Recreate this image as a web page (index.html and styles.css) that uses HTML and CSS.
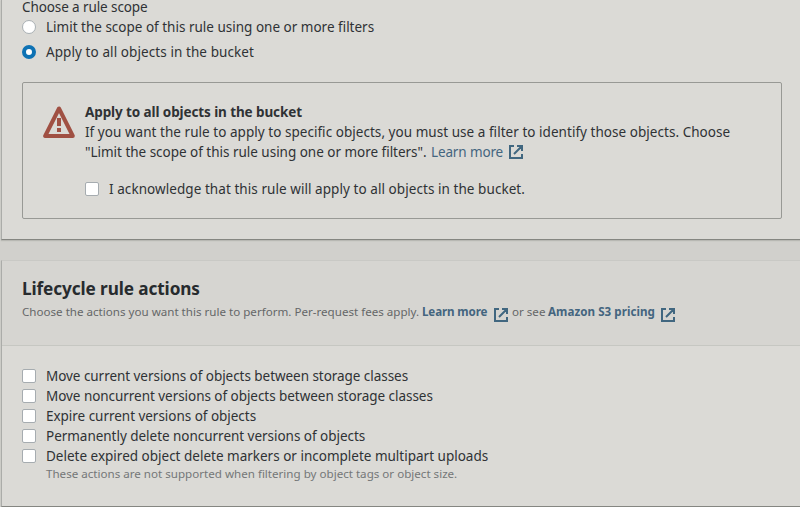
FILE: index.html
```
<!DOCTYPE html>
<html lang="en">
<head>
<meta charset="utf-8">
<title>Lifecycle rule</title>
<link rel="stylesheet" href="styles.css">
</head>
<body>
<svg width="0" height="0" class="defs" aria-hidden="true">
  <symbol id="external" viewBox="0 0 14 14">
    <path d="M5 1H1v12h12V9M8 1h5v5M13 1L5 9" fill="none" stroke="currentColor" stroke-width="2"/>
  </symbol>
</svg>
<main>
  <section class="panel scope">
    <div class="label t-choose">Choose a rule scope</div>
    <label class="option first"><span class="radio"></span><span>Limit the scope of this rule using one or more filters</span></label>
    <label class="option second"><span class="radio checked"></span><span class="t-apply">Apply to all objects in the bucket</span></label>
    <div class="alert">
      <svg class="warning" viewBox="0 0 32 32" aria-hidden="true">
        <path d="M16 2.5L2.2 30h27.6z" fill="none" stroke="#a05043" stroke-width="4" stroke-linejoin="round"/>
        <path d="M16 12v8M16 22v4" fill="none" stroke="#a05043" stroke-width="4"/>
      </svg>
      <div class="message">
        <div class="title">Apply to all objects in the bucket</div>
        <div class="t-if">If you want the rule to apply to specific objects, you must use a filter to identify those objects. Choose</div>
        <div class="row"><span class="quote">"Limit the scope of this rule using one or more filters".</span><a class="learn">Learn more</a><svg class="ext"><use href="#external"/></svg></div>
        <label class="option ack"><span class="box"></span><span class="t-ack">I acknowledge that this rule will apply to all objects in the bucket.</span></label>
      </div>
    </div>
  </section>
  <section class="panel actions">
    <header>
      <h2>Lifecycle rule actions</h2>
      <div class="row description"><span class="intro">Choose the actions you want this rule to perform. Per-request fees apply.</span><a class="more">Learn more</a><svg class="ext low"><use href="#external"/></svg><span class="or">or see</span><a class="pricing">Amazon S3 pricing</a><svg class="ext low"><use href="#external"/></svg></div>
    </header>
    <div class="list">
      <label class="option"><span class="box"></span><span class="t-move">Move current versions of objects between storage classes</span></label>
      <label class="option"><span class="box"></span><span class="t-move">Move noncurrent versions of objects between storage classes</span></label>
      <label class="option"><span class="box"></span><span class="t-expire">Expire current versions of objects</span></label>
      <label class="option"><span class="box"></span><span class="t-expire">Permanently delete noncurrent versions of objects</span></label>
      <label class="option"><span class="box"></span><span>Delete expired object delete markers or incomplete multipart uploads</span></label>
      <div class="hint">These actions are not supported when filtering by object tags or object size.</div>
    </div>
  </section>
</main>
</body>
</html>
```
FILE: styles.css
```
* { box-sizing: border-box; }
body {
  margin: 0;
  height: 507px;
  overflow: hidden;
  background: #d1d0cc;
  color: #2f3235;
  font: 13.5px/20px "Noto Sans", sans-serif;
  white-space: nowrap;
}
.defs { display: block; }
.panel {
  margin-left: 1px;
  background: #dbdad6;
  border-left: 1px solid #abaca9;
  border-bottom: 1px solid #858681;
  box-shadow: 0 1px 1px #b8b8b3;
}
.scope { height: 240px; padding: 0 18px 0 20px; }
.label { line-height: 14px; padding-bottom: 3px; }
.option { display: flex; align-items: center; gap: 10px; }
.second { margin-top: 5px; }
.radio {
  width: 14px;
  height: 14px;
  border: 1px solid #a9b0b4;
  border-radius: 50%;
  background: #fff;
}
.radio.checked { border: 4px solid #0e72b4; }
.box {
  width: 14px;
  height: 14px;
  border: 1px solid #a6acb0;
  border-radius: 2px;
  background: #fff;
}
.alert {
  display: flex;
  gap: 10px;
  height: 137px;
  margin-top: 20px;
  padding: 19px 20px;
  border: 1px solid #989995;
  border-radius: 2px;
}
.warning { width: 32px; height: 32px; margin-top: 4px; }
.title { font-weight: 700; letter-spacing: -0.1px; }
.row { display: flex; align-items: center; }
.ack { margin-top: 17px; }
a { color: #44657f; }
.learn { margin-left: 4px; width: 72px; letter-spacing: -0.13px; }
.quote { width: 342px; letter-spacing: -0.02px; }
.ext { width: 14px; height: 14px; margin-left: 6px; color: #416780; }
.ext.low { margin: 5px 0 0 6px; }
.actions { height: 247px; margin-top: 20px; border-top: 1px solid #c9c9c5; }
header {
  height: 85px;
  padding: 16px 20px 0;
  background: #d6d5d1;
  border-bottom: 1px solid #c6c7c2;
}
h2 {
  margin: 0 0 1px;
  font-size: 17.2px;
  line-height: 24px;
  letter-spacing: -0.1px;
  color: #272b2e;
}
.description { font-size: 11.6px; color: #656768; }
.description a { font-weight: 700; }
.intro { width: 400px; }
.more { width: 66px; letter-spacing: -0.12px; }
.or { width: 36px; margin-left: 4px; }
.pricing { width: 107px; letter-spacing: 0.05px; }
.list { padding: 20px 20px 0; }
.hint { padding-left: 24px; margin-top: -2px; font-size: 11.6px; color: #747778; }
.t-choose { letter-spacing: -0.1px; }
.t-apply { letter-spacing: 0.085px; }
.t-if { letter-spacing: 0.04px; }
.t-ack { letter-spacing: 0.063px; }
.t-move { letter-spacing: -0.047px; }
.t-expire { letter-spacing: -0.03px; }
```
